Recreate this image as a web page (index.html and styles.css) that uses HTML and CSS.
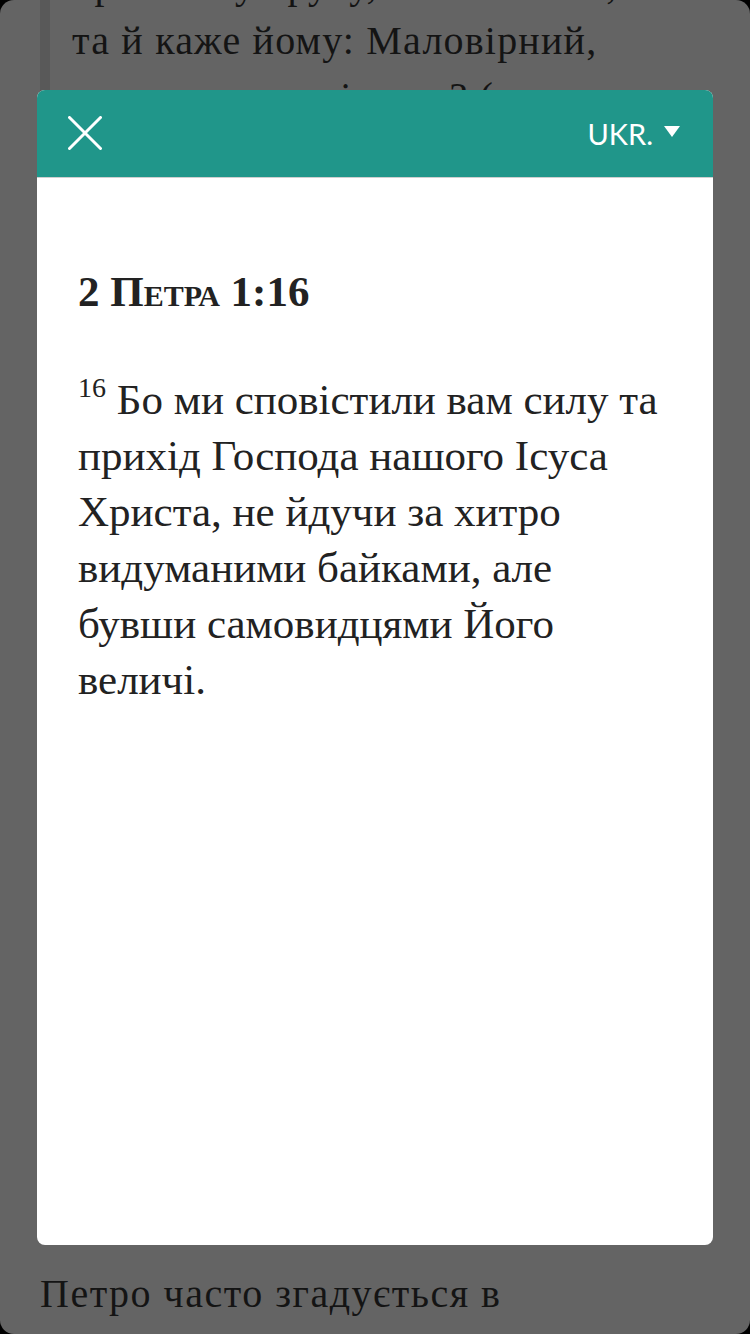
FILE: index.html
```html
<!DOCTYPE html>
<html lang="uk">
<head>
<meta charset="utf-8">
<title>2 Петра 1:16</title>
<link rel="stylesheet" href="styles.css">
</head>
<body>
<div class="screen">
  <div class="page">
    <blockquote class="quote">
      <p>простягнув руку, схопив його,<br>та й каже йому: Маловірний,<br>чого ти засумнівався? (див.</p>
    </blockquote>
    <p class="para">Петро часто згадується в</p>
  </div>
  <div class="overlay">
    <div class="modal">
      <div class="modal-head">
        <button class="close" aria-label="Закрити">
          <svg width="34" height="34" viewBox="0 0 34 34"><path d="M1.5 1.5 L32.5 32.5 M32.5 1.5 L1.5 32.5" stroke="#fff" stroke-width="3" stroke-linecap="round" fill="none"/></svg>
        </button>
        <div class="lang">UKR. <svg class="tri" width="16" height="11" viewBox="0 0 16 11"><path d="M0 0 H16 L8 11 Z" fill="#fff"/></svg></div>
      </div>
      <div class="modal-body">
        <h1 class="ref">2 Петра 1:16</h1>
        <p class="verse"><sup class="vnum">16</sup> Бо ми сповістили вам силу та прихід Господа нашого Ісуса Христа, не йдучи за хитро видуманими байками, але бувши самовидцями Його величі.</p>
      </div>
    </div>
  </div>
</div>
</body>
</html>
```

FILE: styles.css
```css
html, body {
  margin: 0;
  padding: 0;
  background: #000;
}
.screen {
  position: relative;
  width: 750px;
  height: 1334px;
  overflow: hidden;
  border-radius: 14px;
  background: #646464;
}
.page {
  height: 1334px;
  display: flex;
  flex-direction: column;
  box-sizing: border-box;
  padding-bottom: 12px;
  font-family: "Liberation Serif", serif;
  color: #141414;
  font-size: 40px;
  line-height: 56px;
  letter-spacing: 1.2px;
}
.quote {
  margin: -43px 0 0 40px;
  padding-left: 22px;
  border-left: 10px solid #595959;
}
.quote p {
  margin: 0;
}
.para {
  margin: auto 0 0 40px;
  letter-spacing: 1.5px;
}
.overlay {
  position: absolute;
  inset: 0;
  padding: 90px 37px 89px;
  display: flex;
  flex-direction: column;
}
.modal {
  flex: 1;
  background: #fff;
  border-radius: 8px;
  overflow: hidden;
  display: flex;
  flex-direction: column;
}
.modal-head {
  height: 88px;
  flex: none;
  background: #20968a;
  display: flex;
  align-items: center;
  justify-content: space-between;
  padding: 0 33px 0 31px;
  border-bottom: 1px solid #cfcfcf;
  box-sizing: border-box;
}
.close {
  border: 0;
  background: none;
  padding: 0;
  width: 34px;
  height: 34px;
  margin-top: -2px;
}
.close svg { display: block; }
.lang {
  font-family: Lato, "Noto Sans", sans-serif;
  font-size: 29px;
  color: #fff;
  display: flex;
  align-items: center;
  gap: 11px;
}
.tri { margin-top: -4px; }
.modal-body {
  padding: 86px 48px 0 41px;
  font-family: "Liberation Serif", serif;
  color: #222;
}
.ref {
  margin: 0;
  font-size: 43px;
  line-height: 56px;
  font-weight: 700;
  font-variant: small-caps;
}
.verse {
  margin: 52px 0 0;
  font-size: 43px;
  line-height: 56px;
}
.vnum {
  font-size: 28px;
  line-height: 0;
  vertical-align: 0.6em;
}
```
